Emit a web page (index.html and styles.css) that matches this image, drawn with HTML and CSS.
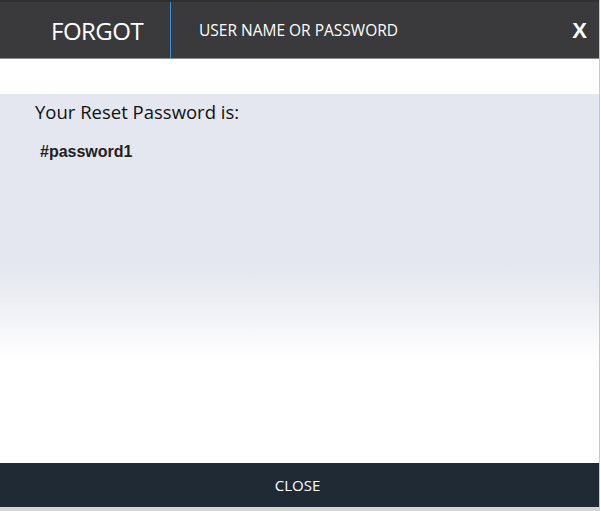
FILE: index.html
```html
<!DOCTYPE html>
<html lang="en">
<head>
    <meta charset="UTF-8">
    <meta name="viewport" content="width=device-width, initial-scale=1.0">
    <title>Forgot User Name or Password</title>
    <link rel="stylesheet" href="styles.css">
</head>
<body>
    <div class="modal">
        <!-- Header -->
        <header class="modal-header">
            <h1 class="modal-title">FORGOT</h1>
            <h2 class="modal-subtitle">USER NAME OR PASSWORD</h2>
            <button class="modal-close" type="button">X</button>
        </header>

        <!-- Body -->
        <div class="modal-spacer"></div>
        <main class="modal-body">
            <p class="reset-label">Your Reset Password is:</p>
            <p class="reset-value">#password1</p>
        </main>

        <!-- Footer -->
        <footer class="modal-footer">
            <button class="close-btn" type="button">CLOSE</button>
        </footer>
    </div>
</body>
</html>
```

FILE: styles.css
```css
/* Basic reset */
* {
    margin: 0;
    padding: 0;
    box-sizing: border-box;
}

body {
    background-color: #ffffff;
    font-family: "Open Sans", "DejaVu Sans", sans-serif;
}

.modal {
    width: 600px;
    height: 511px;
    display: flex;
    flex-direction: column;
    border-right: 1px solid #c9c9c9;
    border-bottom: 4px solid #d6d6d0;
}

/* Header */
.modal-header {
    height: 59px;
    background-color: #3a3a3c;
    border-top: 2px solid #303032;
    border-bottom: 1px solid #8a8a8a;
    display: flex;
    align-items: center;
    color: #ffffff;
}

.modal-title {
    width: 171px;
    height: 100%;
    padding-left: 51px;
    border-right: 1px solid #3a8fd8;
    display: flex;
    align-items: center;
    font-size: 24px;
    font-weight: normal;
    letter-spacing: -0.5px;
}

.modal-subtitle {
    flex: 1;
    padding-left: 28px;
    font-size: 15.5px;
    font-weight: normal;
    letter-spacing: 0;
}

.modal-close {
    background: none;
    border: none;
    color: #ffffff;
    font-family: "Liberation Sans", Arial, sans-serif;
    font-size: 22px;
    font-weight: bold;
    margin-right: 12px;
    margin-top: 2px;
    cursor: pointer;
}

/* Body */
.modal-spacer {
    height: 35px;
}

.modal-body {
    flex: 1;
    padding: 5px 0 0 35px;
    background: linear-gradient(to bottom, #e4e7f0 0px, #e4e7f0 168px, #eaecf2 200px, #f5f6f9 235px, #ffffff 268px);
}

.reset-label {
    font-size: 18.5px;
    color: #111111;
    letter-spacing: 0;
}

.reset-value {
    margin-top: 19px;
    padding-left: 5px;
    font-family: "Liberation Sans", Arial, sans-serif;
    font-size: 16px;
    font-weight: bold;
    color: #222222;
}

/* Footer */
.modal-footer {
    height: 44px;
    background-color: #1f2a35;
    display: flex;
    align-items: center;
    justify-content: center;
}

.close-btn {
    background: none;
    border: none;
    color: #ffffff;
    font-family: "Open Sans", "DejaVu Sans", sans-serif;
    font-size: 15px;
    letter-spacing: 0;
    margin-left: -4px;
    cursor: pointer;
}
```
